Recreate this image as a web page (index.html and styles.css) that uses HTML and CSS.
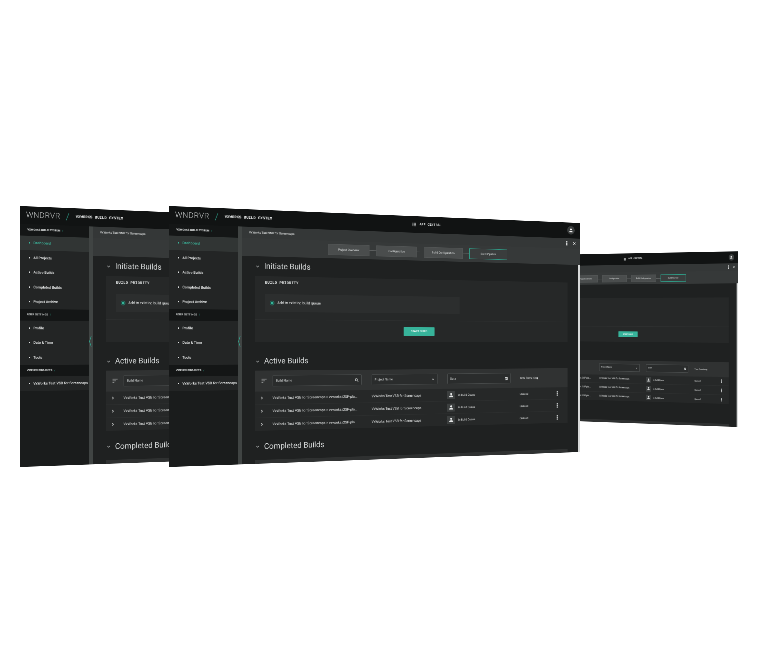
FILE: index.html
```html
<!DOCTYPE html>
<html lang="en">
<head>
<meta charset="utf-8">
<title>VxWorks Build System</title>
<link rel="stylesheet" href="styles.css">
</head>
<body>
<svg class="defs" width="0" height="0" aria-hidden="true">
  <symbol id="i-grid" viewBox="0 0 24 24"><path fill="currentColor" d="M3 3h5v5H3zM10 3h5v5h-5zM17 3h4v5h-4zM3 10h5v5H3zM10 10h5v5h-5zM17 10h4v5h-4zM3 17h5v4H3zM10 17h5v4h-5zM17 17h4v4h-4z"/></symbol>
  <symbol id="i-user" viewBox="0 0 24 24"><circle cx="12" cy="8" r="4.5" fill="currentColor"/><path fill="currentColor" d="M3.5 21v-2c0-3.3 5.6-5 8.500-5s8.500 1.700 8.500 5v2z"/></symbol>
  <symbol id="i-dots" viewBox="0 0 8 24"><path fill="currentColor" d="M1 1h6v6H1zM1 9h6v6H1zM1 17h6v6H1z"/></symbol>
  <symbol id="i-close" viewBox="0 0 24 24"><path fill="none" stroke="currentColor" stroke-width="3" d="M5 5l14 14M19 5L5 19"/></symbol>
  <symbol id="i-down" viewBox="0 0 24 24"><path fill="none" stroke="currentColor" stroke-width="3" d="M6 9l6 6 6-6"/></symbol>
  <symbol id="i-right" viewBox="0 0 24 24"><path fill="none" stroke="currentColor" stroke-width="3.500" d="M9 5l7 7-7 7"/></symbol>
  <symbol id="i-left" viewBox="0 0 12 48"><path fill="none" stroke="currentColor" stroke-width="2.500" d="M10 2L3 24l7 22"/></symbol>
  <symbol id="i-filter" viewBox="0 0 24 24"><path fill="none" stroke="currentColor" stroke-width="3" d="M1 5h22M1 12h14M1 19h8"/></symbol>
  <symbol id="i-search" viewBox="0 0 24 24"><circle cx="10" cy="10" r="6.500" fill="none" stroke="currentColor" stroke-width="3"/><path stroke="currentColor" stroke-width="3" d="M15 15l7 7"/></symbol>
  <symbol id="i-cal" viewBox="0 0 24 24"><path fill="currentColor" d="M3 3h18v19H3z"/><path fill="#2f3131" d="M6 9h5v4H6zM13 9h5v4h-5zM6 15h5v4H6z"/></symbol>
</svg>

<div class="stage">

  <section class="window window-far">
    <header class="topbar">
      <span class="logo">WNDRVR</span><span class="slash">/</span><span class="product">VXWORKS BUILD SYSTEM</span>
      <span class="central"><svg class="ico-grid"><use href="#i-grid"/></svg>APP CENTRAL</span>
      <span class="avatar"><svg class="ico-avatar"><use href="#i-user"/></svg></span>
    </header>
    <div class="body">
      <nav class="sidebar">
        <h3 class="side-head">VXWORKS BUILD SYSTEM <i>/</i></h3>
        <a class="side-item side-active">Dashboard</a>
        <a class="side-item">All Projects</a>
        <a class="side-item">Active Builds</a>
        <a class="side-item">Completed Builds</a>
        <a class="side-item">Project Archive</a>
        <h3 class="side-head">USER SETTINGS <i>/</i></h3>
        <a class="side-item">Profile</a>
        <a class="side-item">Date &amp; Time</a>
        <a class="side-item">Tools</a>
        <h3 class="side-head">OPENED PROJECTS <i>/</i></h3>
        <a class="side-item">VxWorks Test VSB for Screencaps</a>
      </nav>
      <div class="handle"><svg class="ico-left"><use href="#i-left"/></svg></div>
      <main class="main">
        <div class="strip"><span>VxWorks Test VSB for Screencaps</span><svg class="ico-dots"><use href="#i-dots"/></svg><svg class="ico-close"><use href="#i-close"/></svg></div>
        <div class="steps">
          <div class="step">Project Overview</div><div class="link"></div>
          <div class="step">Configuration</div><div class="link"></div>
          <div class="step">Build Configuration</div><div class="link"></div>
          <div class="step step-active">Build Pipeline</div>
        </div>
        <div class="content">
          <div class="scrollbar"></div>
          <h2 class="sec-title sec-first"><svg class="ico-down"><use href="#i-down"/></svg>Initiate Builds</h2>
          <div class="card card-init">
            <div class="mono-label">BUILD PRIORITY</div>
            <div class="radio-panel"><span class="radio"></span>Add to existing build queue</div>
            <div class="card-foot"><button class="start">START BUILD</button></div>
          </div>
          <h2 class="sec-title sec-second"><svg class="ico-down"><use href="#i-down"/></svg>Active Builds</h2>
          <div class="table">
            <div class="tb-row tb-head">
              <span class="tb-filter"><svg class="ico-sm"><use href="#i-filter"/></svg></span>
              <span class="field field-name">Build Name<svg class="ico-xs"><use href="#i-search"/></svg></span>
              <span class="field field-project">Project Name<svg class="ico-xs"><use href="#i-down"/></svg></span>
              <span class="field field-date">Date<svg class="ico-xs"><use href="#i-cal"/></svg></span>
              <span class="small">Time Remaining</span>
              <span></span>
            </div>
            <div class="tb-row">
              <svg class="ico-xs ico-chev"><use href="#i-right"/></svg>
              <span class="cell-name">VxWorks Test VSB for Screencaps &gt; vxworks:i2SP-pla...</span>
              <span class="cell-project">VxWorks Test VSB for Screencaps</span>
              <span class="owner"><span class="owner-ico"><svg class="ico-owner"><use href="#i-user"/></svg></span>in Build Queue</span>
              <span class="small">Queued</span>
              <svg class="ico-kebab"><use href="#i-dots"/></svg>
            </div>
            <div class="tb-row">
              <svg class="ico-xs ico-chev"><use href="#i-right"/></svg>
              <span class="cell-name">VxWorks Test VSB for Screencaps &gt; vxworks:i2SP-pla...</span>
              <span class="cell-project">VxWorks Test VSB for Screencaps</span>
              <span class="owner"><span class="owner-ico"><svg class="ico-owner"><use href="#i-user"/></svg></span>in Build Queue</span>
              <span class="small">Queued</span>
              <svg class="ico-kebab"><use href="#i-dots"/></svg>
            </div>
            <div class="tb-row">
              <svg class="ico-xs ico-chev"><use href="#i-right"/></svg>
              <span class="cell-name">VxWorks Test VSB for Screencaps &gt; vxworks:i2SP-pla...</span>
              <span class="cell-project">VxWorks Test VSB for Screencaps</span>
              <span class="owner"><span class="owner-ico"><svg class="ico-owner"><use href="#i-user"/></svg></span>in Build Queue</span>
              <span class="small">Queued</span>
              <svg class="ico-kebab"><use href="#i-dots"/></svg>
            </div>
          </div>
          <h2 class="sec-title sec-third"><svg class="ico-down"><use href="#i-down"/></svg>Completed Builds</h2>
          <div class="card card-completed"></div>
        </div>
      </main>
    </div>
  </section>

  <section class="window window-left">
    <header class="topbar">
      <span class="logo">WNDRVR</span><span class="slash">/</span><span class="product">VXWORKS BUILD SYSTEM</span>
      <span class="central"><svg class="ico-grid"><use href="#i-grid"/></svg>APP CENTRAL</span>
      <span class="avatar"><svg class="ico-avatar"><use href="#i-user"/></svg></span>
    </header>
    <div class="body">
      <nav class="sidebar">
        <h3 class="side-head">VXWORKS BUILD SYSTEM <i>/</i></h3>
        <a class="side-item side-active">Dashboard</a>
        <a class="side-item">All Projects</a>
        <a class="side-item">Active Builds</a>
        <a class="side-item">Completed Builds</a>
        <a class="side-item">Project Archive</a>
        <h3 class="side-head">USER SETTINGS <i>/</i></h3>
        <a class="side-item">Profile</a>
        <a class="side-item">Date &amp; Time</a>
        <a class="side-item">Tools</a>
        <h3 class="side-head">OPENED PROJECTS <i>/</i></h3>
        <a class="side-item">VxWorks Test VSB for Screencaps</a>
      </nav>
      <div class="handle"><svg class="ico-left"><use href="#i-left"/></svg></div>
      <main class="main">
        <div class="strip"><span>VxWorks Test VSB for Screencaps</span><svg class="ico-dots"><use href="#i-dots"/></svg><svg class="ico-close"><use href="#i-close"/></svg></div>
        <div class="steps">
          <div class="step">Project Overview</div><div class="link"></div>
          <div class="step">Configuration</div><div class="link"></div>
          <div class="step">Build Configuration</div><div class="link"></div>
          <div class="step step-active">Build Pipeline</div>
        </div>
        <div class="content">
          <div class="scrollbar"></div>
          <h2 class="sec-title sec-first"><svg class="ico-down"><use href="#i-down"/></svg>Initiate Builds</h2>
          <div class="card card-init">
            <div class="mono-label">BUILD PRIORITY</div>
            <div class="radio-panel"><span class="radio"></span>Add to existing build queue</div>
            <div class="card-foot"><button class="start">START BUILD</button></div>
          </div>
          <h2 class="sec-title sec-second"><svg class="ico-down"><use href="#i-down"/></svg>Active Builds</h2>
          <div class="table">
            <div class="tb-row tb-head">
              <span class="tb-filter"><svg class="ico-sm"><use href="#i-filter"/></svg></span>
              <span class="field field-name">Build Name<svg class="ico-xs"><use href="#i-search"/></svg></span>
              <span class="field field-project">Project Name<svg class="ico-xs"><use href="#i-down"/></svg></span>
              <span class="field field-date">Date<svg class="ico-xs"><use href="#i-cal"/></svg></span>
              <span class="small">Time Remaining</span>
              <span></span>
            </div>
            <div class="tb-row">
              <svg class="ico-xs ico-chev"><use href="#i-right"/></svg>
              <span class="cell-name">VxWorks Test VSB for Screencaps &gt; vxworks:i2SP-pla...</span>
              <span class="cell-project">VxWorks Test VSB for Screencaps</span>
              <span class="owner"><span class="owner-ico"><svg class="ico-owner"><use href="#i-user"/></svg></span>in Build Queue</span>
              <span class="small">Queued</span>
              <svg class="ico-kebab"><use href="#i-dots"/></svg>
            </div>
            <div class="tb-row">
              <svg class="ico-xs ico-chev"><use href="#i-right"/></svg>
              <span class="cell-name">VxWorks Test VSB for Screencaps &gt; vxworks:i2SP-pla...</span>
              <span class="cell-project">VxWorks Test VSB for Screencaps</span>
              <span class="owner"><span class="owner-ico"><svg class="ico-owner"><use href="#i-user"/></svg></span>in Build Queue</span>
              <span class="small">Queued</span>
              <svg class="ico-kebab"><use href="#i-dots"/></svg>
            </div>
            <div class="tb-row">
              <svg class="ico-xs ico-chev"><use href="#i-right"/></svg>
              <span class="cell-name">VxWorks Test VSB for Screencaps &gt; vxworks:i2SP-pla...</span>
              <span class="cell-project">VxWorks Test VSB for Screencaps</span>
              <span class="owner"><span class="owner-ico"><svg class="ico-owner"><use href="#i-user"/></svg></span>in Build Queue</span>
              <span class="small">Queued</span>
              <svg class="ico-kebab"><use href="#i-dots"/></svg>
            </div>
          </div>
          <h2 class="sec-title sec-third"><svg class="ico-down"><use href="#i-down"/></svg>Completed Builds</h2>
          <div class="card card-completed"></div>
        </div>
      </main>
    </div>
  </section>

  <section class="window window-front">
    <header class="topbar">
      <span class="logo">WNDRVR</span><span class="slash">/</span><span class="product">VXWORKS BUILD SYSTEM</span>
      <span class="central"><svg class="ico-grid"><use href="#i-grid"/></svg>APP CENTRAL</span>
      <span class="avatar"><svg class="ico-avatar"><use href="#i-user"/></svg></span>
    </header>
    <div class="body">
      <nav class="sidebar">
        <h3 class="side-head">VXWORKS BUILD SYSTEM <i>/</i></h3>
        <a class="side-item side-active">Dashboard</a>
        <a class="side-item">All Projects</a>
        <a class="side-item">Active Builds</a>
        <a class="side-item">Completed Builds</a>
        <a class="side-item">Project Archive</a>
        <h3 class="side-head">USER SETTINGS <i>/</i></h3>
        <a class="side-item">Profile</a>
        <a class="side-item">Date &amp; Time</a>
        <a class="side-item">Tools</a>
        <h3 class="side-head">OPENED PROJECTS <i>/</i></h3>
        <a class="side-item">VxWorks Test VSB for Screencaps</a>
      </nav>
      <div class="handle"><svg class="ico-left"><use href="#i-left"/></svg></div>
      <main class="main">
        <div class="strip"><span>VxWorks Test VSB for Screencaps</span><svg class="ico-dots"><use href="#i-dots"/></svg><svg class="ico-close"><use href="#i-close"/></svg></div>
        <div class="steps">
          <div class="step">Project Overview</div><div class="link"></div>
          <div class="step">Configuration</div><div class="link"></div>
          <div class="step">Build Configuration</div><div class="link"></div>
          <div class="step step-active">Build Pipeline</div>
        </div>
        <div class="content">
          <div class="scrollbar"></div>
          <h2 class="sec-title sec-first"><svg class="ico-down"><use href="#i-down"/></svg>Initiate Builds</h2>
          <div class="card card-init">
            <div class="mono-label">BUILD PRIORITY</div>
            <div class="radio-panel"><span class="radio"></span>Add to existing build queue</div>
            <div class="card-foot"><button class="start">START BUILD</button></div>
          </div>
          <h2 class="sec-title sec-second"><svg class="ico-down"><use href="#i-down"/></svg>Active Builds</h2>
          <div class="table">
            <div class="tb-row tb-head">
              <span class="tb-filter"><svg class="ico-sm"><use href="#i-filter"/></svg></span>
              <span class="field field-name">Build Name<svg class="ico-xs"><use href="#i-search"/></svg></span>
              <span class="field field-project">Project Name<svg class="ico-xs"><use href="#i-down"/></svg></span>
              <span class="field field-date">Date<svg class="ico-xs"><use href="#i-cal"/></svg></span>
              <span class="small">Time Remaining</span>
              <span></span>
            </div>
            <div class="tb-row">
              <svg class="ico-xs ico-chev"><use href="#i-right"/></svg>
              <span class="cell-name">VxWorks Test VSB for Screencaps &gt; vxworks:i2SP-pla...</span>
              <span class="cell-project">VxWorks Test VSB for Screencaps</span>
              <span class="owner"><span class="owner-ico"><svg class="ico-owner"><use href="#i-user"/></svg></span>in Build Queue</span>
              <span class="small">Queued</span>
              <svg class="ico-kebab"><use href="#i-dots"/></svg>
            </div>
            <div class="tb-row">
              <svg class="ico-xs ico-chev"><use href="#i-right"/></svg>
              <span class="cell-name">VxWorks Test VSB for Screencaps &gt; vxworks:i2SP-pla...</span>
              <span class="cell-project">VxWorks Test VSB for Screencaps</span>
              <span class="owner"><span class="owner-ico"><svg class="ico-owner"><use href="#i-user"/></svg></span>in Build Queue</span>
              <span class="small">Queued</span>
              <svg class="ico-kebab"><use href="#i-dots"/></svg>
            </div>
            <div class="tb-row">
              <svg class="ico-xs ico-chev"><use href="#i-right"/></svg>
              <span class="cell-name">VxWorks Test VSB for Screencaps &gt; vxworks:i2SP-pla...</span>
              <span class="cell-project">VxWorks Test VSB for Screencaps</span>
              <span class="owner"><span class="owner-ico"><svg class="ico-owner"><use href="#i-user"/></svg></span>in Build Queue</span>
              <span class="small">Queued</span>
              <svg class="ico-kebab"><use href="#i-dots"/></svg>
            </div>
          </div>
          <h2 class="sec-title sec-third"><svg class="ico-down"><use href="#i-down"/></svg>Completed Builds</h2>
          <div class="card card-completed"></div>
        </div>
      </main>
    </div>
  </section>

</div>
</body>
</html>
```

FILE: styles.css
```css
* { box-sizing: border-box; }
html, body { margin: 0; padding: 0; background: #fff; }
.defs { position: absolute; }
.stage { position: relative; width: 762px; height: 655px; overflow: hidden; background: #fff; }

.window {
  position: absolute; width: 1920px; height: 1080px;
  display: flex; flex-direction: column; overflow: hidden;
  transform-origin: 0 0;
  will-change: transform;
  text-rendering: geometricPrecision;
  filter: blur(1.4px);
  background: #1c1e1e; color: #d4d7d7;
  font-family: Roboto, "Liberation Sans", sans-serif;
}
.window-front { zoom: .5; left: 338px; top: 412px; transform: matrix3d(.48794,.020184,0,7.278e-5, 0,.48334,0,0, 0,0,1,0, 0,0,0,1); }
.window-left  { zoom: .5; left: 40px;  top: 412px; transform: matrix3d(.48794,.020184,0,7.278e-5, 0,.48334,0,0, 0,0,1,0, 0,0,0,1); }
.window-far   { zoom: .3; left: 1631.67px; top: 852.33px; transform: matrix3d(.39697,-.007523,0,-4.061e-5, 0,.5,0,0, 0,0,1,0, 0,0,0,1); }

/* Parts of the back windows that lie wholly behind the front window. */
.window-left .central, .window-left .avatar, .window-left .step, .window-left .start,
.window-left .field-project, .window-left .field-date, .window-left .cell-project,
.window-left .owner, .window-left .small, .window-left .ico-kebab { visibility: hidden; }
.window-far .logo, .window-far .slash, .window-far .product, .window-far .sidebar,
.window-far .handle, .window-far .strip span, .window-far .sec-title,
.window-far .mono-label, .window-far .field-name, .window-far .ico-chev,
.window-far .radio-panel { visibility: hidden; }

/* top bar */
.topbar { height: 73px; flex: none; display: flex; align-items: center; padding: 0 28px 0 25px; background: #111313; }
.logo { font-size: 33px; font-weight: 300; letter-spacing: 1px; color: #c9cccc; width: 165px; }
.slash { font-size: 40px; font-weight: 300; color: #2fa48d; width: 42px; }
.product { font-family: "Liberation Mono", monospace; font-size: 17px; font-weight: 700; color: #e2e4e4; width: 205px; white-space: nowrap; }
.central { display: flex; align-items: center; gap: 17px; margin-left: 636px; font-family: "Liberation Mono", monospace; font-size: 16px; font-weight: 700; color: #e0e3e3; }
.ico-grid { width: 20px; height: 22px; color: #c8cbcb; }
.avatar { margin-left: auto; width: 40px; height: 40px; border-radius: 50%; background: #3a3d3d; display: flex; align-items: center; justify-content: center; color: #f0f0f0; }
.ico-avatar { width: 24px; height: 24px; }

/* layout */
.body { flex: 1; min-height: 0; display: flex; }
.sidebar { width: 288px; flex: none; background: #1a1c1c; display: flex; flex-direction: column; }
.side-head { margin: 0; height: 48px; flex: none; display: flex; align-items: center; gap: 8px; padding-left: 30px; background: #141616; font-size: 11.5px; font-weight: 700; color: #dcdfdf; }
.side-head i { color: #2fa48d; font-style: normal; font-weight: 400; }
.side-item { height: 61px; flex: none; display: flex; align-items: center; gap: 14px; padding-left: 35px; background: #232525; font-size: 15px; font-weight: 500; color: #e6e8e8; white-space: nowrap; }
.side-item::before { content: ""; width: 6px; height: 6px; border-radius: 50%; background: #e6e8e8; }
.side-active { background: #313534; color: #3cc0a4; }
.side-active::before { background: #3cc0a4; }
.handle { width: 18px; flex: none; background: #404443; display: flex; align-items: center; justify-content: flex-start; padding-bottom: 35px; color: #2fa48d; }
.ico-left { width: 12px; height: 48px; }
.main { flex: 1; min-width: 0; display: flex; flex-direction: column; }

/* strip and stepper */
.strip { height: 48px; flex: none; display: flex; align-items: center; gap: 26px; padding: 0 20px 0 30px; background: #343737; font-size: 13px; font-weight: 500; color: #e2e4e4; }
.strip span { margin-right: auto; }
.ico-dots { width: 8px; height: 26px; color: #e8eaea; }
.ico-close { width: 20px; height: 20px; }
.steps { height: 77px; flex: none; display: flex; align-items: center; justify-content: center; background: #363939; }
.step { width: 190px; height: 48px; display: flex; align-items: center; justify-content: center; background: #4a4d4d; border: 2px solid #525555; font-size: 13px; color: #dcdfdf; }
.step-active { background: #3a3d3d; border: 3px solid #2f9a85; }
.link { width: 33px; height: 2px; background: #5c5f5f; }

/* content */
.content { position: relative; flex: 1; min-height: 0; overflow: hidden; padding: 0 67px 0 56px; background: #1f2121; }
.scrollbar { position: absolute; right: 0; top: 0; bottom: 0; width: 10px; background: #d8dada; }
.sec-title { margin: 0; height: 60px; display: flex; align-items: center; gap: 17px; padding-left: 0; font-size: 34px; font-weight: 400; color: #d8dbdb; white-space: nowrap; }
.sec-first { margin-top: 12px; margin-bottom: 12px; }
.sec-second { margin-top: 52px; margin-bottom: 10px; }
.sec-third { margin-top: 37px; margin-bottom: 26px; }
.ico-down { width: 22px; height: 22px; color: #b5b8b8; }
.card { background: #262828; }
.card-init { height: 280px; position: relative; padding: 0 0 0 43px; }
.mono-label { height: 58px; padding-top: 18px; font-family: "Liberation Mono", monospace; font-size: 17.5px; font-weight: 700; color: #d6d9d9; }
.radio-panel { width: 898px; height: 75px; margin-top: 18px; display: flex; align-items: center; gap: 13px; padding-left: 21px; background: #2c2e2e; font-size: 16px; color: #e6e8e8; }
.radio { width: 20px; height: 20px; border-radius: 50%; border: 3px solid #2fa48d; background: radial-gradient(circle, #36b398 0 5px, #173a33 6px); }
.card-foot { position: absolute; left: 0; right: 0; top: 183px; bottom: 0; border-top: 2px solid #2d2f2f; display: flex; justify-content: center; padding-top: 29px; }
.start { width: 147px; height: 37px; border: 0; border-radius: 2px; background: #37b39a; color: #f6f8f8; font: 700 13px Roboto, sans-serif; padding: 0; }
.card-completed { height: 40px; background: #2f3131; }

/* table */
.table { background: #262828; }
.tb-row { height: 56px; display: grid; grid-template-columns: 76px 446px 360px 361px 159px 71px; align-items: center; border-top: 2px solid #2c2e2e; font-size: 15.5px; color: #e2e4e4; }
.tb-head { height: 88px; border-top: 0; background: #303232; }
.tb-filter { display: flex; justify-content: center; color: #8e9191; }
.ico-sm { width: 26px; height: 24px; }
.ico-xs { width: 18px; height: 18px; }
.ico-chev { justify-self: center; margin-left: -20px; color: #e2e4e4; }
.field { height: 49px; display: flex; align-items: center; justify-content: space-between; padding: 0 12px; border: 2px solid #474a4a; border-radius: 3px; background: #2a2c2c; font-size: 14px; color: #d0d3d3; }
.field-name { width: 400px; }
.field-project { width: 313px; }
.field-date { width: 316px; }
.small { font-size: 13px; white-space: nowrap; }
.cell-name, .cell-project { white-space: nowrap; }
.owner { display: flex; align-items: center; gap: 18px; font-size: 13px; }
.owner-ico { width: 36px; height: 36px; display: flex; align-items: center; justify-content: center; background: #3c3f3f; color: #e4e6e6; margin-left: 0; }
.ico-owner { width: 26px; height: 26px; }
.ico-kebab { width: 8px; height: 28px; justify-self: center; color: #c4c7c7; }
```
